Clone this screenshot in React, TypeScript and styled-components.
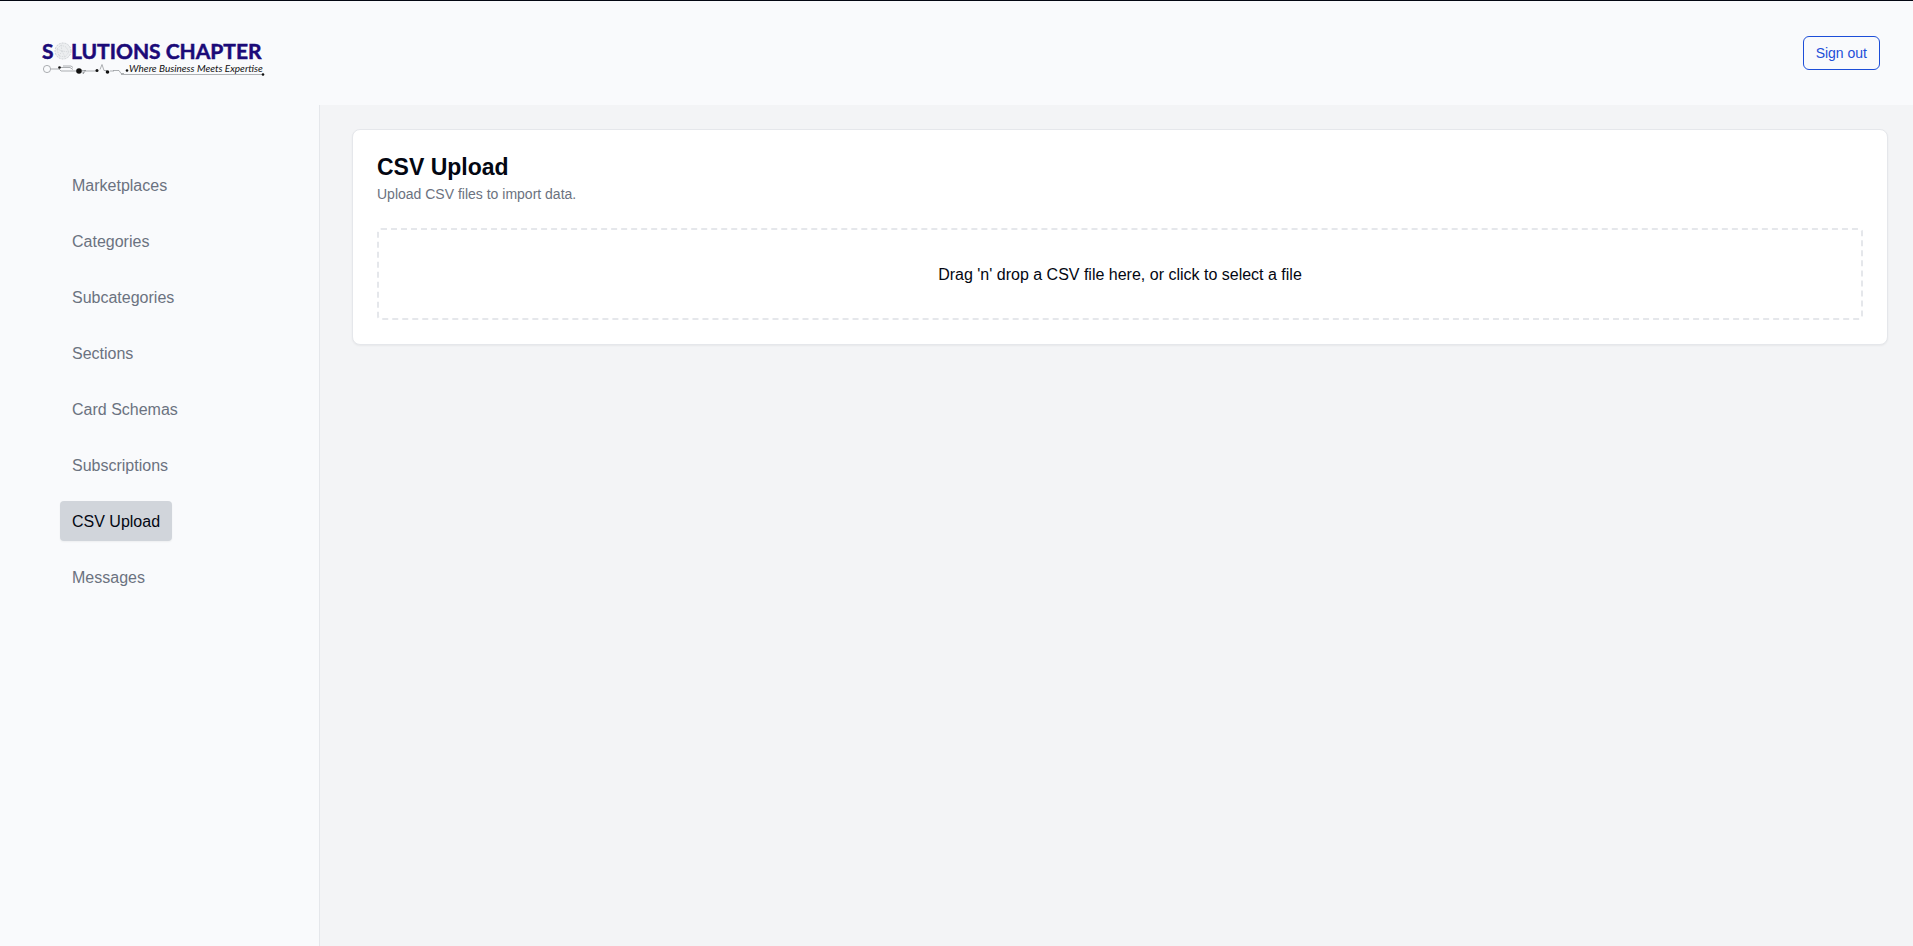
import React, { useRef } from "react";
import styled, { createGlobalStyle } from "styled-components";

const GlobalStyle = createGlobalStyle`
  *, *::before, *::after { box-sizing: border-box; }
  body {
    margin: 0;
    background: #f9fafb;
    color: #030712;
    font-family: "Liberation Sans", Arial, sans-serif;
    font-size: 16px;
    line-height: 24px;
  }
`;

const Page = styled.div`
  display: flex;
  flex-direction: column;
  min-height: 100vh;
  border-top: 1px solid #030712;
`;

const Header = styled.header`
  display: flex;
  align-items: center;
  justify-content: space-between;
  height: 104px;
  padding: 0 33px 0 40px;
  background: #f9fafc;
`;

const HomeLink = styled.a`
  display: block;
  line-height: 0;
`;

const SignOutButton = styled.button`
  height: 34px;
  padding: 0 12px;
  border: 1px solid #1d4ed8;
  border-radius: 6px;
  background: transparent;
  color: #1d4ed8;
  font: inherit;
  font-size: 14px;
  line-height: 20px;
  cursor: pointer;
`;

const Body = styled.div`
  display: flex;
  flex: 1;
`;

const Sidebar = styled.nav`
  flex: 0 0 320px;
  padding: 60px;
  border-right: 1px solid #e5e7eb;
  background: #f9fafc;
`;

const NavList = styled.ul`
  display: flex;
  flex-direction: column;
  align-items: flex-start;
  gap: 16px;
  margin: 0;
  padding: 0;
  list-style: none;
`;

const NavLink = styled.a<{ $active: boolean }>`
  display: block;
  padding: 9px 12px 7px;
  border-radius: 4px;
  color: ${(p) => (p.$active ? "#030712" : "#6b7280")};
  background: ${(p) => (p.$active ? "#d1d5db" : "transparent")};
  box-shadow: ${(p) => (p.$active ? "0 1px 2px rgba(0, 0, 0, 0.05)" : "none")};
  text-decoration: none;
`;

const Main = styled.main`
  flex: 1;
  padding: 24px 25px 24px 32px;
  background: #f3f4f6;
`;

const Card = styled.section`
  padding: 24px;
  border: 1px solid #e5e7eb;
  border-radius: 8px;
  background: #fff;
  box-shadow: 0 1px 2px rgba(0, 0, 0, 0.05);
`;

const CardHeader = styled.div`
  display: flex;
  flex-direction: column;
  gap: 4px;
  margin-bottom: 24px;
`;

const CardTitle = styled.h1`
  margin: 0;
  font-size: 23px;
  font-weight: 700;
  line-height: 26px;
`;

const CardDescription = styled.p`
  margin: 0;
  color: #6b7280;
  font-size: 14px;
  line-height: 20px;
`;

const DropZone = styled.button`
  display: block;
  width: 100%;
  padding: 33px 32px 31px;
  border: 2px dashed #e5e7eb;
  border-radius: 4px;
  background: transparent;
  color: inherit;
  font: inherit;
  text-align: center;
  cursor: pointer;
`;

const LogoName = styled.text`
  fill: #1b0a78;
  stroke: #1b0a78;
  stroke-width: 0.5px;
  font-family: Lato, sans-serif;
  font-size: 21px;
  font-weight: 700;
`;

const LogoTagline = styled.text`
  fill: #111;
  font-family: Lato, sans-serif;
  font-size: 10px;
  font-style: italic;
`;

const navItems = [
  "Marketplaces",
  "Categories",
  "Subcategories",
  "Sections",
  "Card Schemas",
  "Subscriptions",
  "CSV Upload",
  "Messages",
];

function Logo() {
  return (
    <svg width="230" height="46" viewBox="40 30 230 46" role="img" aria-label="Solutions Chapter">
      <LogoName x="42" y="59">S</LogoName>
      <circle cx="63" cy="51" r="8" fill="#eceef0" stroke="#c3c6ca" strokeWidth="0.8" strokeDasharray="2 1" />
      <path
        d="M57 49l4-4 5 2 3 5-4 5-6-1zM61 45l1 6 7 1M57 49l5 2-3 5M62 51l3 6"
        fill="none"
        stroke="#c9ccd0"
        strokeWidth="0.6"
        strokeDasharray="1.5 1"
      />
      <LogoName x="71" y="59">LUTIONS CHAPTER</LogoName>
      <g fill="none" stroke="#8b8e92" strokeWidth="0.7">
        <circle cx="47" cy="69" r="3.6" />
        <path d="M51 69h8l2 2h16M59 67.500h11l3 2M63 66h8l2 1.500M82 70.500h4l-2 0M82 72h2l-1 2 2-3h11M100 69.500l2-5 2 6h3M113 70.500h6l2 3h3M110 71h4" />
      </g>
      <path d="M121 74.500h142" stroke="#aeb1b4" />
      <g fill="#111">
        <circle cx="59.500" cy="67.500" r="1.300" />
        <circle cx="79" cy="71" r="2.800" />
        <circle cx="97" cy="70.500" r="1.500" />
        <circle cx="107.500" cy="72" r="1.800" />
        <circle cx="127" cy="70.500" r="1.300" />
        <circle cx="263" cy="74.500" r="1.300" />
      </g>
      <LogoTagline x="129" y="72">Where Business Meets Expertise</LogoTagline>
    </svg>
  );
}

export default function App() {
  const fileInput = useRef<HTMLInputElement>(null);

  return (
    <>
      <GlobalStyle />
      <Page>
        <Header>
          <HomeLink href="#">
            <Logo />
          </HomeLink>
          <SignOutButton type="button">Sign out</SignOutButton>
        </Header>
        <Body>
          <Sidebar aria-label="Main">
            <NavList>
              {navItems.map((label) => (
                <li key={label}>
                  <NavLink
                    href="#"
                    $active={label === "CSV Upload"}
                    aria-current={label === "CSV Upload" ? "page" : undefined}
                  >
                    {label}
                  </NavLink>
                </li>
              ))}
            </NavList>
          </Sidebar>
          <Main>
            <Card>
              <CardHeader>
                <CardTitle>CSV Upload</CardTitle>
                <CardDescription>Upload CSV files to import data.</CardDescription>
              </CardHeader>
              <DropZone type="button" onClick={() => fileInput.current?.click()}>
                Drag 'n' drop a CSV file here, or click to select a file
              </DropZone>
              <input ref={fileInput} type="file" accept=".csv" aria-label="CSV file" hidden />
            </Card>
          </Main>
        </Body>
      </Page>
    </>
  );
}
